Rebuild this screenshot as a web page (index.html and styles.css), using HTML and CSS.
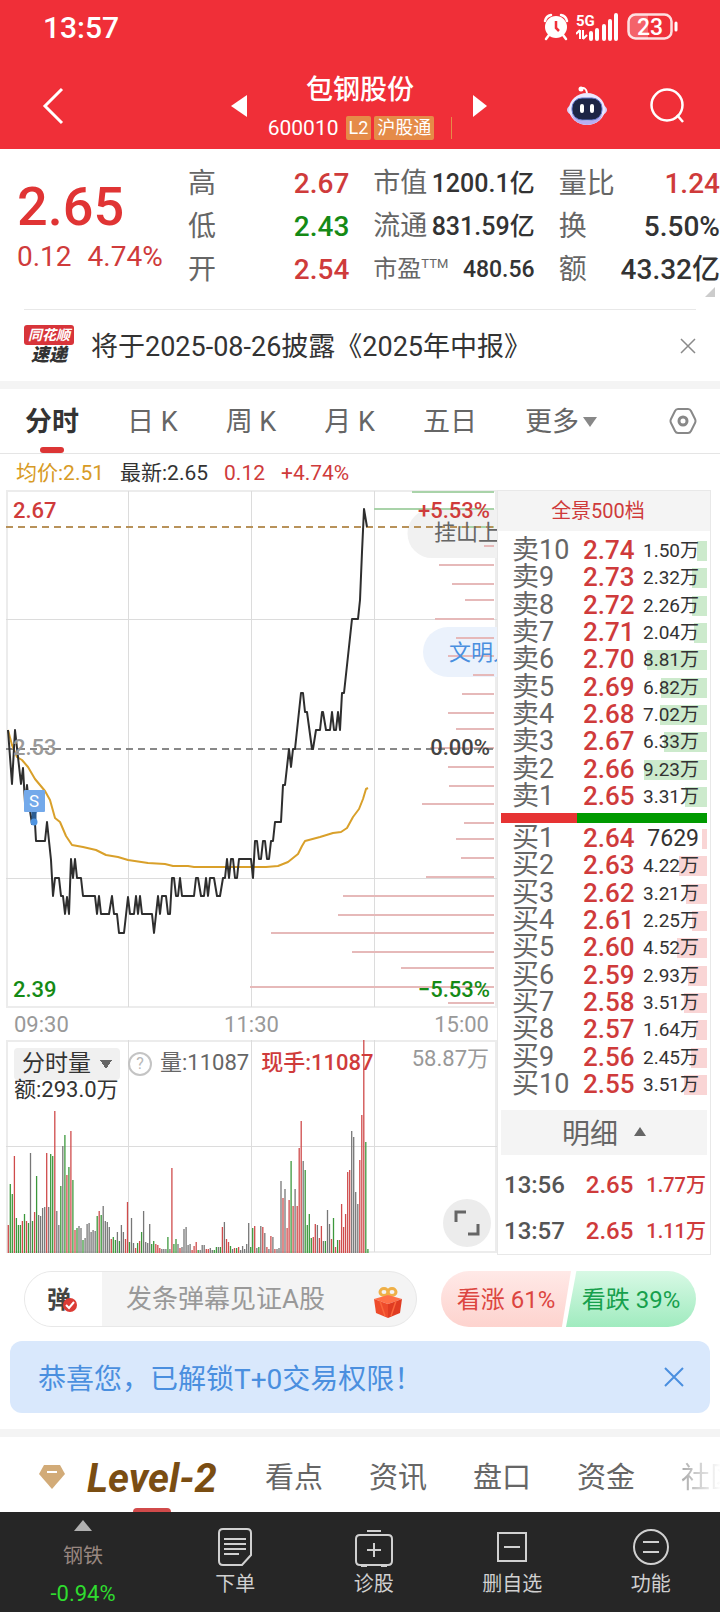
FILE: index.html
```html
<!DOCTYPE html>
<html lang="zh-CN">
  <head>
    <meta charset="utf-8">
    <meta name="viewport" content="width=device-width, initial-scale=1">
    <title>包钢股份 600010</title>
    <link rel="stylesheet" href="styles.css">
  </head>

  <body>
    <header class="header">
      <div class="status">
        <span class="clock">13:57</span>
        <div class="status-icons">
          <svg width="26" height="28" viewBox="0 0 26 28">
            <circle cx="13" cy="14" r="11" fill="#fff"/>
            <path d="M2 8Q3 3 8 2M24 8Q23 3 18 2M6 22l-3 4M20 22l3 4" fill="none" stroke="#fff" stroke-width="2.5" stroke-linecap="round"/>
            <path d="M13 8v7l3 3" fill="none" stroke="#f02f38" stroke-width="2.5"/>
          </svg>
          <svg width="44" height="28" viewBox="0 0 44 28">
            <text class="net" x="0" y="13">5G</text>
            <path d="M4 17v9M0 21l4-4M7 17v9M11 22l-4 4" fill="none" stroke="#fff" stroke-width="2"/>
            <path d="M15 20v6M21 17v9M28 13v13M34 8v18M40 2v24" fill="none" stroke="#fff" stroke-width="4" stroke-linecap="round"/>
          </svg>
          <svg width="52" height="28" viewBox="0 0 52 28">
            <path d="M9 2h12v24H9q-7 0-7-7V9q0-7 7-7z" fill="#fff" opacity=".25"/>
            <rect x="1.500" y="1.500" width="43" height="24" rx="7" fill="none" stroke="#fff" stroke-width="2.500" opacity=".85"/>
            <path d="M49 10v7" stroke="#fff" stroke-width="3" stroke-linecap="round"/>
            <text class="charge" x="23" y="22">23</text>
          </svg>
        </div>
      </div>

      <nav class="titlebar">
        <button class="back" aria-label="返回">
          <svg width="24" height="40" viewBox="0 0 24 40"><path d="M21 3L4 20l17 17" fill="none" stroke="#fff" stroke-width="3"/></svg>
        </button>
        <div class="stock">
          <button aria-label="上一只"><svg width="18" height="24" viewBox="0 0 18 24"><path d="M17 1v22L1 12z" fill="#fff"/></svg></button>
          <div class="stock-name">
            <h1>包钢股份</h1>
            <p><span>600010</span><span class="tag tag-l2">L2</span><span class="tag">沪股通</span></p>
          </div>
          <button aria-label="下一只"><svg width="18" height="24" viewBox="0 0 18 24"><path d="M1 1v22L15 12z" fill="#fff"/></svg></button>
        </div>
        <div class="tools">
          <button aria-label="智能助手">
            <svg width="42" height="42" viewBox="0 0 42 42">
              <path d="M14 4q6-3 7 4" fill="none" stroke="#fff" stroke-width="2"/>
              <circle cx="15" cy="4" r="2.500" fill="#fff"/>
              <ellipse cx="21" cy="25" rx="20" ry="8" fill="#d9d0fa"/>
              <ellipse cx="21" cy="24" rx="18" ry="16" fill="#ece8ff"/>
              <path d="M5 29q4 11 16 11t16-11q-6 7-16 7T5 29z" fill="#b9aef2"/>
              <rect x="6" y="13" width="30" height="22" rx="10" fill="#1d2545" stroke="#6579cc"/>
              <path d="M16 21v5M26 21v5" stroke="#fff" stroke-width="4" stroke-linecap="round"/>
            </svg>
          </button>
          <button aria-label="搜索">
            <svg width="38" height="38" viewBox="0 0 38 38"><circle cx="18" cy="18" r="15.500" fill="none" stroke="#fff" stroke-width="2.500"/><path d="M28 28l6 7" stroke="#fff" stroke-width="2.500"/></svg>
          </button>
        </div>
      </nav>
    </header>

    <section class="quote">
      <div class="price up">
        <strong>2.65</strong>
        <p><span>0.12</span><span>4.74%</span></p>
      </div>
      <dl>
        <div><dt>高</dt><dd class="up">2.67</dd></div>
        <div><dt>低</dt><dd class="down">2.43</dd></div>
        <div><dt>开</dt><dd class="up">2.54</dd></div>
      </dl>
      <dl class="mid">
        <div><dt>市值</dt><dd>1200.1亿</dd></div>
        <div><dt>流通</dt><dd>831.59亿</dd></div>
        <div class="small"><dt>市盈<sup>TTM</sup></dt><dd>480.56</dd></div>
      </dl>
      <dl>
        <div><dt>量比</dt><dd class="up">1.24</dd></div>
        <div><dt>换</dt><dd>5.50%</dd></div>
        <div><dt>额</dt><dd>43.32亿</dd></div>
      </dl>
      <i class="corner"></i>
    </section>

    <section class="news">
      <div class="news-logo"><b>同花顺</b><i>速递</i></div>
      <a href="#">将于2025-08-26披露《2025年中报》</a>
      <button aria-label="关闭"><svg width="16" height="16" viewBox="0 0 16 16"><path d="M1 1l14 14M15 1L1 15" stroke="#8a8a8a" stroke-width="1.500"/></svg></button>
    </section>

    <nav class="periods">
      <a href="#" class="active">分时</a>
      <a href="#">日 K</a>
      <a href="#">周 K</a>
      <a href="#">月 K</a>
      <a href="#">五日</a>
      <a href="#" class="more">更多<i></i></a>
      <button aria-label="设置">
        <svg width="28" height="28" viewBox="0 0 28 28"><path d="M9 2h10q2 0 3 2l4 8q1 2 0 4l-4 8q-1 2-3 2H9q-2 0-3-2l-4-8q-1-2 0-4l4-8q1-2 3-2z" fill="none" stroke="#888" stroke-width="2"/><circle cx="14" cy="14" r="4" fill="none" stroke="#888" stroke-width="3"/></svg>
      </button>
    </nav>

    <p class="legend"><span class="avg">均价:2.51</span><span>最新:2.65</span><span class="up">0.12</span><span class="up">+4.74%</span></p>

    <main class="board">
      <section class="charts">
        <svg class="chart" viewBox="6 490 491 518">
          <path class="frame" d="M6 491h491M7 490v518M6 1007h491M496 490v518"/>
          <path class="grid" d="M128.500 491v516M251.500 491v516M374.500 491v516M6 619.500h491M6 878.500h491"/>
          <path class="pill-gray" d="M497 509h-65a24.500 24.500 0 0 0 0 49h65z"/>
          <path class="pill-blue" d="M497 627h-49a25 25 0 0 0 0 50h49z"/>
          <path class="ladder-down" d="M412 492h82M374 509h120M459 527h35"/>
          <g id="ladder" class="ladder-up"></g>
          <path d="M6 527h488" stroke="#b8925a" stroke-width="2" stroke-dasharray="7 5"/>
          <path d="M6 749h488" stroke="#888" stroke-width="2" stroke-dasharray="7 5"/>
          <text x="434" y="540" fill="#666">挂山上</text>
          <text x="449" y="660" fill="#4a8fdf">文明人</text>
          <polyline id="avg" class="avg-line"/>
          <polyline id="price" class="price-line"/>
          <text x="13" y="518" class="t-up">2.67</text>
          <text x="13" y="755" class="t-flat">2.53</text>
          <text x="13" y="997" class="t-down">2.39</text>
          <text x="490" y="518" class="t-up end">+5.53%</text>
          <text x="490" y="755" class="t-zero end">0.00%</text>
          <text x="490" y="997" class="t-down end">−5.53%</text>
          <path d="M25 791h19v20h-7l-3 4-3-4h-6z" fill="#73a9ea" stroke="#73a9ea" stroke-linejoin="round" stroke-width="2"/>
          <path d="M34 812v8" stroke="#2c5d92" stroke-width="5"/>
          <circle cx="34" cy="822" r="3.500" fill="#4f94e0"/>
          <text x="34" y="807" class="mark">S</text>
        </svg>
        <div class="times"><span>09:30</span><span>11:30</span><span>15:00</span></div>
        <div class="volume">
          <svg viewBox="0 0 491 213">
            <path class="frame" d="M0 1h491M1 0v213M0 212h491M490 0v213"/>
            <path class="grid" d="M122.500 0v212M245.500 0v212M368.500 0v212M0 106.500h491"/>
            <g id="bars"></g>
          </svg>
          <div class="volume-head">
            <select aria-label="指标"><option>分时量</option></select>
            <button class="help" aria-label="说明">?</button>
            <span>量:11087</span>
            <span class="up">现手:11087</span>
            <span class="max">58.87万</span>
          </div>
          <p class="amount">额:293.0万</p>
          <button class="expand" aria-label="全屏">
            <svg width="28" height="28" viewBox="0 0 28 28"><path d="M3 13V3h10M25 15v10H15" fill="none" stroke="#666" stroke-width="3"/></svg>
          </button>
        </div>
      </section>

      <aside class="book">
        <a href="#" class="book-title">全景500档</a>
        <table class="sell">
          <tbody id="sell"></tbody>
        </table>
        <div class="ratio"><i></i></div>
        <table class="buy">
          <tbody id="buy"></tbody>
        </table>
        <button class="detail">明细<i></i></button>
        <table class="trades">
          <tr><td>13:56</td><td>2.65</td><td>1.77万</td></tr>
          <tr><td>13:57</td><td>2.65</td><td>1.11万</td></tr>
        </table>
      </aside>
    </main>

    <section class="social">
      <div class="comment">
        <label for="danmu">弹
          <svg width="14" height="14" viewBox="0 0 14 14"><circle cx="7" cy="7" r="7" fill="#dc3c35"/><path d="M3 7l3 3 5-6" fill="none" stroke="#fff" stroke-width="2"/></svg>
        </label>
        <input id="danmu" type="text" placeholder="发条弹幕见证A股">
        <svg width="28" height="32" viewBox="0 0 28 32">
          <ellipse cx="10" cy="5" rx="4" ry="3.500" fill="none" stroke="#efb047" stroke-width="3"/>
          <ellipse cx="18" cy="5" rx="4" ry="3.500" fill="none" stroke="#efb047" stroke-width="3"/>
          <path d="M0 12l14-4 14 4-14 5z" fill="#ff7048"/>
          <path d="M0 12l14 5v14L2 26z" fill="#ee4b2b"/>
          <path d="M28 12l-14 5v14l12-5z" fill="#e03c22"/>
          <path d="M6 14l5 15M22 14l-5 15" stroke="#f9663c" stroke-width="1.500"/>
        </svg>
      </div>
      <div class="vote">
        <button class="bull">看涨 61%</button>
        <button class="bear">看跌 39%</button>
      </div>
    </section>

    <section class="notice">
      <p>恭喜您，已解锁T+0交易权限！</p>
      <button aria-label="关闭"><svg width="20" height="20" viewBox="0 0 20 20"><path d="M1 1l18 18M19 1L1 19" stroke="#4a8fdf" stroke-width="2"/></svg></button>
    </section>

    <nav class="tabs">
      <svg width="28" height="28" viewBox="0 0 28 28"><path d="M6 2h16l5 9-13 15L1 11z" fill="#d2ab78"/><path d="M9 9h10" stroke="#fff" stroke-width="2"/></svg>
      <a href="#" class="level2">Level-2</a>
      <a href="#">看点</a>
      <a href="#">资讯</a>
      <a href="#">盘口</a>
      <a href="#">资金</a>
      <a href="#" class="fade">社区</a>
    </nav>

    <footer class="footer">
      <a href="#" class="sector"><i></i><span>钢铁</span><b>-0.94%</b></a>
      <a href="#">
        <svg width="36" height="40" viewBox="0 0 36 40"><path d="M6 2h24q4 0 4 4v22l-9 10H6q-4 0-4-4V6q0-4 4-4z"/><path d="M7 12h22M7 17h22M7 22h22M7 27h15"/></svg>
        下单
      </a>
      <a href="#">
        <svg width="40" height="40" viewBox="0 0 40 40"><path d="M13 4h14M6 8h28q4 0 4 4v22q0 4-4 4H6q-4 0-4-4V12q0-4 4-4zM20 16v14M13 23h14M7 39h6M27 39h6"/></svg>
        诊股
      </a>
      <a href="#">
        <svg width="32" height="40" viewBox="0 0 32 40"><path d="M2 6h28v28H2zM8 20h16"/></svg>
        删自选
      </a>
      <a href="#">
        <svg width="38" height="40" viewBox="0 0 38 40"><circle cx="19" cy="20" r="17"/><path d="M11 15h16M11 25h16"/></svg>
        功能
      </a>
    </footer>

    <script src="script.js"></script>
  </body>
</html>
```
FILE: styles.css
```css
* {
  box-sizing: border-box;
}
body {
  margin: 0;
  background: #fff;
  color: #333;
  font-family: Roboto, "Noto Sans CJK SC", sans-serif;
  font-size: 28px;
}
a {
  color: inherit;
  text-decoration: none;
}
button, input, select {
  margin: 0;
  padding: 0;
  border: 0;
  background: none;
  color: inherit;
  font: inherit;
}
h1, p, dl, dd {
  margin: 0;
}
svg {
  display: block;
  flex: none;
}
.up {
  color: #cf3b3b;
}
.down {
  color: #158a15;
}

/* header */
.header {
  height: 149px;
  background: #f02f38;
  color: #fff;
}
.status {
  display: flex;
  justify-content: space-between;
  align-items: center;
  height: 64px;
  padding: 0 41px 10px 43px;
}
.clock {
  font-size: 30px;
  font-weight: 500;
}
.status-icons {
  display: flex;
  gap: 7px;
}
.net {
  fill: #fff;
  font-size: 15px;
  font-weight: 700;
}
.charge {
  fill: #fff;
  font-size: 23px;
  font-weight: 500;
  text-anchor: middle;
}
.titlebar {
  display: grid;
  grid-template-columns: 1fr 260px 1fr;
  align-items: center;
  height: 84px;
}
.back {
  justify-self: start;
  padding-left: 41px;
}
.stock {
  display: flex;
  justify-content: space-between;
  align-items: center;
}
.stock-name {
  display: flex;
  flex-direction: column;
  align-items: center;
  padding-top: 3px;
}
.stock h1 {
  font-size: 27px;
  font-weight: 500;
  line-height: 40px;
}
.stock p {
  display: flex;
  align-items: center;
  gap: 3px;
  height: 36px;
  font-size: 21px;
}
.stock p::after {
  content: "";
  width: 1px;
  height: 22px;
  margin-left: 14px;
  background: #e58b48;
}
.tag {
  height: 24px;
  padding: 0 3px;
  border-radius: 2px;
  background: #e58b48;
  font-size: 18px;
  line-height: 24px;
}
.tag-l2 {
  margin-left: 4px;
}
.tools {
  display: flex;
  justify-content: flex-end;
  gap: 41px;
  padding-right: 33px;
}

/* quote */
.quote {
  position: relative;
  display: grid;
  grid-template-columns: 147px 1fr 1fr 1fr;
  gap: 24px;
  padding: 13px 0 18px 17px;
}
.price {
  padding-top: 15px;
}
.price strong {
  display: block;
  color: #e03434;
  font-size: 54px;
  font-weight: 500;
  line-height: 60px;
}
.price p {
  display: flex;
  gap: 16px;
  line-height: 40px;
}
.quote dl div {
  display: flex;
  justify-content: space-between;
  height: 43px;
  line-height: 43px;
}
.quote dt {
  color: #666;
  white-space: nowrap;
}
.quote dd {
  font-weight: 500;
}
.quote .mid dt {
  font-size: 27px;
}
.quote .mid dd {
  font-size: 25px;
}
.quote .mid .small dt {
  font-size: 24px;
}
.quote .mid .small dd {
  font-size: 23px;
}
.quote sup {
  font-size: 13px;
  line-height: 13px;
}
.corner {
  position: absolute;
  right: 5px;
  bottom: 12px;
  border-bottom: 10px solid #ccc;
  border-left: 10px solid transparent;
}

/* news line */
.news {
  display: flex;
  align-items: center;
  height: 72px;
  margin: 0 24px;
  border-top: 1px solid #e8e8e8;
  font-size: 27px;
}
.news a {
  flex: 1;
  margin-left: 17px;
  padding-bottom: 3px;
}
.news-logo {
  width: 50px;
  font-size: 15px;
  line-height: 20px;
  text-align: center;
}
.news-logo b {
  display: block;
  border-radius: 3px;
  background: #d8343a;
  color: #fff;
  font-size: 14px;
  font-style: italic;
}
.news-logo i {
  font-size: 18px;
  font-weight: 900;
}

/* periods */
.periods {
  display: flex;
  justify-content: space-between;
  align-items: center;
  height: 73px;
  padding: 0 23px 0 25px;
  border-top: 8px solid #f4f4f4;
  border-bottom: 1px solid #e5e5e5;
  color: #666;
  font-size: 27px;
}
.periods a {
  padding-top: 2px;
  line-height: 62px;
}
.periods .active {
  position: relative;
  color: #333;
  font-weight: 700;
}
.periods .active::after {
  content: "";
  position: absolute;
  left: 15px;
  bottom: 0;
  width: 24px;
  height: 6px;
  border-radius: 3px;
  background: #dc3535;
}
.more {
  display: flex;
  align-items: center;
  gap: 4px;
}
.more i {
  border: 7px solid transparent;
  border-top: 10px solid #888;
  border-bottom: 0;
}
.periods button {
  margin-left: 24px;
}
.legend {
  display: flex;
  gap: 16px;
  height: 36px;
  padding-left: 16px;
  font-size: 21px;
  line-height: 38px;
}
.legend .avg {
  color: #d89b26;
}

/* charts */
.board {
  display: grid;
  grid-template-columns: 1fr 214px;
  padding: 0 9px 0 6px;
}
.charts svg {
  width: 100%;
}
.chart text {
  font-size: 22px;
}
.frame {
  fill: none;
  stroke: #ececec;
  stroke-width: 2;
}
.grid {
  fill: none;
  stroke: #dcdcdc;
}
.ladder-up path {
  stroke: #e6b9b9;
  stroke-width: 2;
}
.ladder-down {
  stroke: #a9d3a9;
  stroke-width: 2;
}
.pill-gray {
  fill: #f1f1f1;
}
.pill-blue {
  fill: #ebf2fc;
}
.price-line, .avg-line {
  fill: none;
  stroke: #2e2e2e;
  stroke-width: 2;
  stroke-linejoin: round;
}
.avg-line {
  stroke: #d9a02a;
}
.chart .t-up, .chart .t-down, .chart .t-flat, .chart .t-zero {
  fill: #cf3b3b;
  font-weight: 500;
}
.chart .t-down {
  fill: #158a15;
}
.chart .t-flat {
  fill: #999;
}
.chart .t-zero {
  fill: #444;
}
.chart .end {
  text-anchor: end;
}
.chart .mark {
  fill: #fff;
  font-size: 17px;
  text-anchor: middle;
}
.times {
  display: flex;
  justify-content: space-between;
  height: 32px;
  padding: 0 8px;
  color: #999;
  font-size: 22px;
  line-height: 34px;
}
.volume {
  position: relative;
}
.volume-head {
  position: absolute;
  top: 8px;
  left: 8px;
  right: 8px;
  display: flex;
  align-items: center;
  gap: 8px;
  height: 32px;
  color: #666;
  font-size: 22px;
  line-height: 28px;
}
.volume-head span {
  padding-bottom: 3px;
}
.volume-head select {
  appearance: none;
  width: 106px;
  height: 32px;
  padding-left: 8px;
  border-radius: 4px;
  background-color: #f0f0f0;
  background-image: linear-gradient(to bottom left, #666 50%, transparent 50%), linear-gradient(to bottom right, #666 50%, transparent 50%);
  background-position: 86px 12px, 92px 12px;
  background-repeat: no-repeat;
  background-size: 6px 9px;
  color: #333;
  font-size: 23px;
}
.volume-head .help {
  width: 24px;
  height: 24px;
  border: 2px solid #c4c4c4;
  border-radius: 50%;
  color: #b8b8b8;
  font-size: 16px;
  line-height: 20px;
}
.volume-head .up {
  margin-left: 4px;
  color: #cf3b3b;
  font-weight: 500;
}
.volume-head .max {
  margin-left: auto;
  padding-bottom: 11px;
  color: #999;
}
.amount {
  position: absolute;
  top: 39px;
  left: 8px;
  font-size: 22px;
  line-height: 22px;
}
.expand {
  position: absolute;
  right: 6px;
  bottom: 6px;
  display: flex;
  justify-content: center;
  align-items: center;
  width: 48px;
  height: 48px;
  border-radius: 50%;
  background: #ececec;
}
.charts .expand svg {
  width: 28px;
}

/* order book */
.book {
  border: 1px solid #e8e8e8;
}
.book-title {
  display: block;
  height: 40px;
  background: #f4f4f4;
  color: #cf3b3b;
  font-size: 20px;
  line-height: 40px;
  text-align: center;
  padding-right: 12px;
}
.book table {
  width: 100%;
  border-collapse: collapse;
}
.book td {
  padding: 0;
  line-height: 27px;
}
.sell, .buy {
  height: 273px;
}
.sell {
  margin: 6px 0 3px;
}
.sell td:first-child, .buy td:first-child {
  width: 74px;
  padding-left: 14px;
  color: #666;
  font-size: 27px;
  white-space: nowrap;
}
.sell td:nth-child(2), .buy td:nth-child(2) {
  width: 64px;
  padding-left: 11px;
  color: #cf3b3b;
  font-size: 26px;
  font-weight: 500;
}
.qty {
  position: relative;
  display: block;
  padding-right: 11px;
  font-size: 19px;
  text-align: right;
}
.qty.big {
  font-size: 23px;
}
.qty i {
  position: absolute;
  top: 4px;
  right: 3px;
  z-index: -1;
  height: 20px;
  background: #cceacc;
}
.buy .qty i {
  background: #f9d5d5;
}
.ratio {
  height: 10px;
  margin: 0 3px;
  background: #009a00;
}
.ratio i {
  display: block;
  width: 37%;
  height: 10px;
  background: #e63333;
}
.buy {
  margin: 2px 0 12px;
}
.detail {
  display: flex;
  justify-content: center;
  align-items: center;
  gap: 16px;
  width: 206px;
  height: 45px;
  margin: 0 3px;
  padding-bottom: 2px;
  background: #f4f4f4;
  color: #666;
}
.detail i {
  border: 6px solid transparent;
  border-bottom: 9px solid #666;
  border-top: 0;
}
.book .trades {
  margin-top: 7px;
}
.trades td {
  height: 46px;
  padding-left: 14px;
  color: #cf3b3b;
  font-size: 24px;
  font-weight: 500;
}
.trades td:first-child {
  padding-left: 6px;
  color: #555;
}
.trades td:last-child {
  padding: 0 4px 0 0;
  font-size: 20px;
  text-align: right;
}

/* comment and vote */
.social {
  display: flex;
  gap: 24px;
  padding: 16px 24px 14px;
}
.comment {
  display: flex;
  flex: 1;
  align-items: center;
  height: 56px;
  padding-right: 14px;
  border: 1px solid #e8e8e8;
  border-radius: 28px;
  background: #f4f4f4;
  overflow: hidden;
}
.comment label {
  display: flex;
  align-items: center;
  width: 77px;
  height: 56px;
  padding: 0 0 4px 22px;
  background: #fff;
  color: #444;
  font-size: 24px;
  font-weight: 700;
}
.comment label svg {
  margin: 16px 0 0 -8px;
}
.comment input {
  flex: 1;
  min-width: 0;
  padding-left: 24px;
  font-size: 26px;
}
.comment input::placeholder {
  color: #999;
}
.comment > svg {
  margin-top: 8px;
}
.vote {
  display: flex;
  width: 255px;
  height: 56px;
  border-radius: 28px;
  font-size: 24px;
  overflow: hidden;
}
.vote button {
  flex: 1;
  padding-bottom: 4px;
}
.bull {
  background: linear-gradient(#ffe9e7, #fdd3ce);
  color: #dc4540;
  clip-path: polygon(0 0, 100% 0, 93% 100%, 0 100%);
}
.vote .bear {
  margin-left: -5px;
  background: linear-gradient(#d8f9e5, #a0ebbf);
  color: #16a04c;
  clip-path: polygon(8% 0, 100% 0, 100% 100%, 0 100%);
}

.notice {
  display: flex;
  justify-content: space-between;
  align-items: center;
  height: 72px;
  margin: 0 10px 16px;
  padding: 0 26px 0 28px;
  border-radius: 12px;
  background: #d9e8fc;
  color: #4a8fdf;
  font-size: 28px;
}

/* bottom tabs */
.tabs {
  display: flex;
  align-items: center;
  height: 83px;
  padding: 8px 0 0 38px;
  border-top: 8px solid #f4f4f4;
  color: #666;
  font-size: 29px;
  white-space: nowrap;
  overflow: hidden;
}
.tabs > svg {
  margin-bottom: 4px;
}
.tabs a {
  flex: none;
  margin-right: 46px;
  line-height: 67px;
}
.tabs .level2 {
  position: relative;
  width: 132px;
  margin: 0 46px 0 21px;
  color: #7a4d12;
  font-size: 40px;
  font-style: italic;
  font-weight: 700;
}
.level2::after {
  content: "";
  position: absolute;
  left: 46px;
  bottom: 0;
  width: 38px;
  height: 4px;
  border-radius: 4px 4px 0 0;
  background: #d14a4a;
}
.tabs .fade {
  margin: 0;
  background: linear-gradient(90deg, #aaa, #fff 40px);
  background-clip: text;
  color: transparent;
}

.footer {
  display: grid;
  grid-template-columns: 166px repeat(4, 1fr);
  height: 101px;
  background: #262626;
  color: #d0d0d0;
  font-size: 20px;
}
.footer a {
  display: flex;
  flex-direction: column;
  align-items: center;
  gap: 4px;
  padding-top: 15px;
  line-height: 26px;
}
.footer svg {
  fill: none;
  stroke: #d0d0d0;
  stroke-width: 2;
}
.footer .sector {
  gap: 12px;
  padding-top: 8px;
  color: #988780;
}
.sector i {
  border: 9px solid transparent;
  border-top: 0;
  border-bottom: 11px solid #b0b0b0;
}
.sector b {
  color: #2fdc2f;
  font-size: 22px;
  font-weight: 400;
}
```
FILE: script.js
```js
const SVG = "http://www.w3.org/2000/svg";

// intraday price and average, x y pairs
const price = `8,730 12,784 15,730 21,784 23,768 25,803 27,785 29,804 32,824 34,806 36,841 45,841 47,822
  51,860 53,896 55,878 59,878 61,896 63,896 65,914 67,897 69,914 71,859 73,878 75,859 77,878 81,878 83,896
  95,896 97,914 99,896 101,914 109,914 112,896 114,914 117,914 119,933 124,933 128,897 130,914 134,914
  136,896 138,914 140,896 142,914 152,914 154,933 158,896 160,914 162,896 166,896 168,914 170,914 172,878
  174,878 176,896 178,896 180,878 182,896 194,896 196,878 198,878 201,896 204,896 206,878 208,896 210,878
  214,878 217,896 220,896 223,878 225,878 227,859 229,878 231,859 233,859 235,878 237,878 239,859 251,859
  253,878 255,841 257,841 259,859 261,859 263,841 265,841 267,859 269,859 271,841 273,841 275,822 281,822
  283,785 285,785 289,749 291,767 293,749 295,749 301,693 303,693 305,712 307,712 312,749 313,749 316,730
  320,730 322,712 323,712 326,730 330,730 332,712 334,730 336,730 338,712 340,730 342,693 344,693 352,619
  358,619 360,600 362,552 364,509 367,527`;

const avg = `8,730 12,745 17,757 22,760 28,767 35,779 45,791 50,800 55,818 60,822 66,836 72,845 83,847 96,850
  106,855 118,857 128,860 148,863 165,864 173,866 188,866 194,867 266,867 278,866 288,862 298,854 302,846
  305,841 320,837 333,833 341,832 347,828 353,817 359,809 363,799 366,789 368,788`;

document.getElementById("price").setAttribute("points", price);
document.getElementById("avg").setAttribute("points", avg);

function addPath(parent, d) {
  const path = document.createElementNS(SVG, "path");
  path.setAttribute("d", d);
  parent.appendChild(path);
  return path;
}

// left end and height of each line
const ladder = [
  [484, 546], [439, 565], [452, 584], [465, 600], [435, 619], [456, 638], [448, 656], [473, 675],
  [462, 694], [448, 713], [456, 729], [430, 748], [448, 767], [449, 786], [422, 804], [464, 823],
  [456, 839], [461, 858], [426, 877], [343, 896], [338, 915], [271, 933], [352, 952], [401, 968],
  [250, 987], [448, 1003]
];
for (const [x, y] of ladder) {
  addPath(document.getElementById("ladder"), `M${x} ${y}H494`);
}

// minute volume: r up, g down, n flat
const volume = `r28 g69 g59 r97 g35 g28 g28 r32 g39 r32 g30 n100 g32 r41 g77 n38 n37 n45 n46 r100 n46 g99 g97
  r142 n42 n28 g67 n107 g118 r78 g86 r122 g73 r23 g25 n27 n25 g13 n15 n29 n30 n21 n23 n22 g37 r42 g38 n47
  n32 n31 n26 r14 g16 g13 n21 g12 n28 n21 r14 r51 g11 n35 n10 r5 g10 r12 g21 n42 n11 n10 n29 g9 g12 r9 r8
  r5 n4 n4 n4 g16 n4 r85 g9 g14 n9 r5 n6 n24 n26 n8 n9 r3 r7 r11 g3 n3 n8 n8 r4 r4 n5 n3 g3 g6 n6 g6 r26
  n31 r14 r11 g7 n4 r5 g5 r6 n3 n7 n4 n9 n30 g6 g25 r27 n5 g6 n27 r26 n20 r6 n4 r17 n16 r4 n4 n5 n72 r55
  n64 r25 r53 g92 r47 n64 r47 r105 r132 n92 g83 g28 g39 g15 r16 r29 n28 r15 r27 n12 g12 n43 n29 r14 g35
  r6 g13 r13 r49 r26 r39 r81 r83 n122 n116 n61 n49 r93 r138 r213 g111 g4`.split(/\s+/);
const colors = { r: "#cf4b4b", g: "#3c983c", n: "#777" };
volume.forEach((v, i) => {
  const x = (2.3 + i * 2.02).toFixed(1);
  const bar = addPath(document.getElementById("bars"), `M${x} 213v-${v.slice(1)}`);
  bar.setAttribute("stroke", colors[v[0]]);
  bar.setAttribute("stroke-width", "1.3");
});

// price, amount, depth bar width
const sell = [
  ["2.74", "1.50万", 10], ["2.73", "2.32万", 15], ["2.72", "2.26万", 15], ["2.71", "2.04万", 13],
  ["2.70", "8.81万", 60], ["2.69", "6.82万", 46], ["2.68", "7.02万", 47], ["2.67", "6.33万", 43],
  ["2.66", "9.23万", 63], ["2.65", "3.31万", 22]
];
const buy = [
  ["2.64", "7629", 5], ["2.63", "4.22万", 28], ["2.62", "3.21万", 21], ["2.61", "2.25万", 15],
  ["2.60", "4.52万", 30], ["2.59", "2.93万", 19], ["2.58", "3.51万", 23], ["2.57", "1.64万", 11],
  ["2.56", "2.45万", 16], ["2.55", "3.51万", 23]
];

function row(label, [p, qty, width]) {
  const big = qty.endsWith("万") ? "" : " big";
  return `<tr><td>${label}</td><td>${p}</td><td><span class="qty${big}">${qty}<i style="width: ${width}px"></i></span></td></tr>`;
}
document.getElementById("sell").innerHTML = sell.map((r, i) => row("卖" + (10 - i), r)).join("");
document.getElementById("buy").innerHTML = buy.map((r, i) => row("买" + (i + 1), r)).join("");
```
